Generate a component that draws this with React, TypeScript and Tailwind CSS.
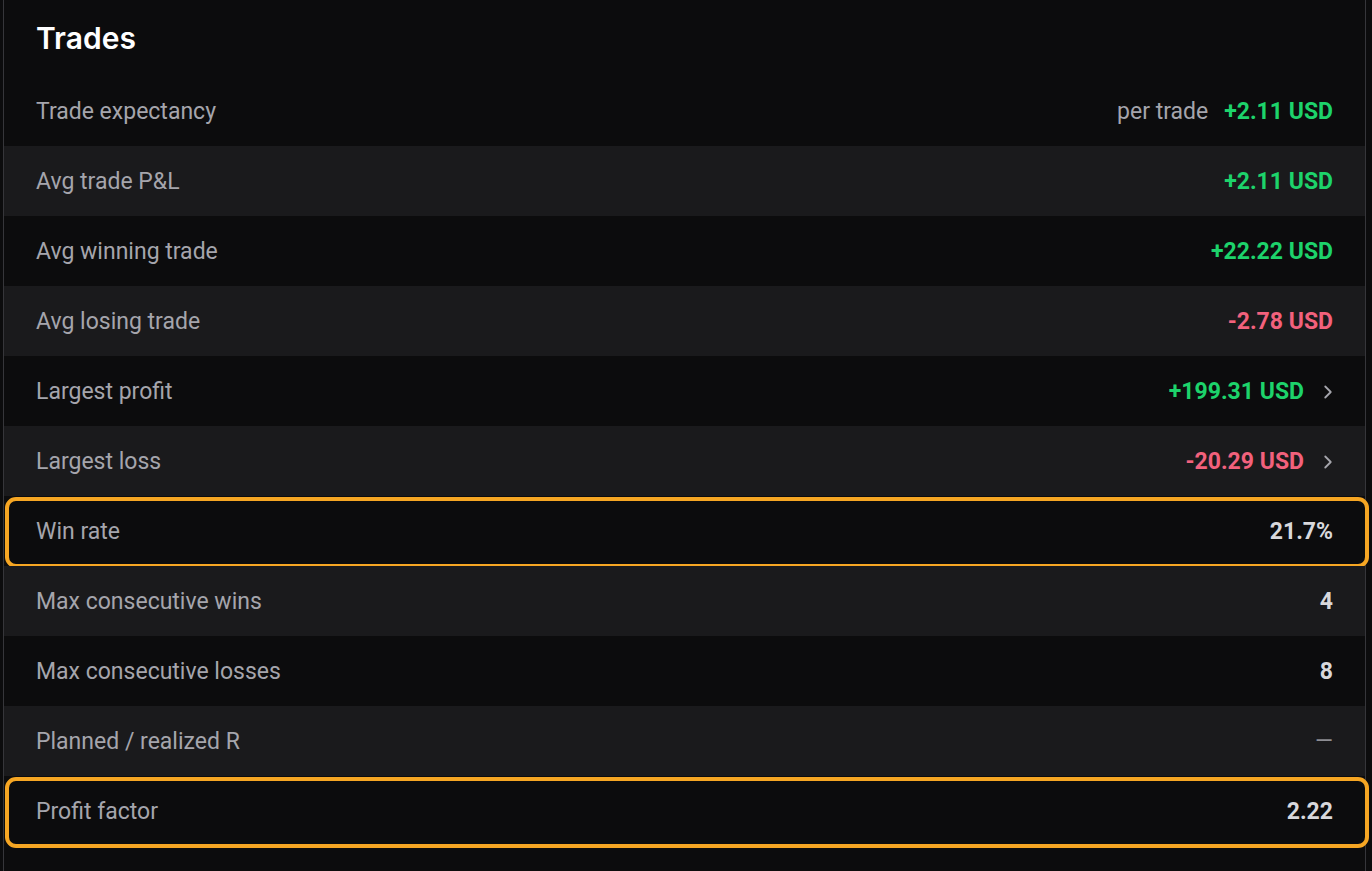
import { ChevronRight } from "lucide-react";

type Row = {
  label: string;
  value: string;
  tone?: "pos" | "neg" | "plain" | "muted";
  prefix?: string;
  link?: boolean;
  highlight?: boolean;
};

const rows: Row[] = [
  { label: "Trade expectancy", value: "+2.11 USD", tone: "pos", prefix: "per trade" },
  { label: "Avg trade P&L", value: "+2.11 USD", tone: "pos" },
  { label: "Avg winning trade", value: "+22.22 USD", tone: "pos" },
  { label: "Avg losing trade", value: "-2.78 USD", tone: "neg" },
  { label: "Largest profit", value: "+199.31 USD", tone: "pos", link: true },
  { label: "Largest loss", value: "-20.29 USD", tone: "neg", link: true },
  { label: "Win rate", value: "21.7%", highlight: true },
  { label: "Max consecutive wins", value: "4" },
  { label: "Max consecutive losses", value: "8" },
  { label: "Planned / realized R", value: "—", tone: "muted" },
  { label: "Profit factor", value: "2.22", highlight: true },
];

const toneClass = {
  pos: "text-[#1dd36b]",
  neg: "text-[#f2617c]",
  plain: "text-[#d8d8dc]",
  muted: "text-[#8e8e94] font-normal",
};

export default function App() {
  return (
    <div
      className="h-[871px] w-full overflow-hidden bg-[#0c0c0d]"
      style={{ fontFamily: "Roboto, 'Noto Sans', sans-serif" }}
    >
      <div className="ml-[3px] h-full w-[1363px] border-x border-[#36363a]">
        <div className="flex h-[76px] items-center px-8">
          <h2
            className="text-[30px] font-semibold text-white"
            style={{ fontFamily: "Inter, 'Noto Sans', sans-serif" }}
          >
            Trades
          </h2>
        </div>
        {rows.map((row, i) => (
          <div
            key={row.label}
            className={`relative flex h-[70px] items-center justify-between px-8 pt-[2px] text-[23px] ${
              i % 2 === 1 && !row.highlight ? "bg-[#1a1a1c]" : "bg-[#0c0c0d]"
            }`}
          >
            <span className="text-[#a5a5ac]">{row.label}</span>
            <div className="flex items-center">
              {row.prefix && (
                <span className="mr-4 text-[#a5a5ac]">{row.prefix}</span>
              )}
              <span className={`font-bold ${toneClass[row.tone ?? "plain"]}`}>
                {row.value}
              </span>
              {row.link && (
                <ChevronRight className="ml-[13px] -mr-[6px] size-[22px] text-[#a5a5ac]" strokeWidth={2} />
              )}
            </div>
            {row.highlight && (
              <div className="pointer-events-none absolute top-[1px] -bottom-[2px] left-[1px] -right-[4px] rounded-[11px] border-[4px] border-[#f6a623]" />
            )}
          </div>
        ))}
      </div>
    </div>
  );
}
